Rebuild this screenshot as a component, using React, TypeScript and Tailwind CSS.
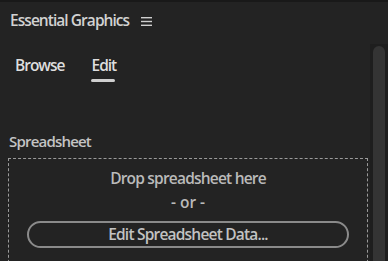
import React from "react";

export default function App() {
  return (
    <div
      className="relative w-[388px] h-[261px] overflow-hidden bg-[#232323] text-[#d4d4d4]"
      style={{ fontFamily: '"Open Sans", "Noto Sans", sans-serif' }}
    >
      <div className="h-[2px] bg-[#191919]" />
      <div className="flex items-center h-[38px] pl-[10px]">
        <span className="text-[15.5px] font-semibold tracking-[-0.95px] text-[#d2d2d2]">Essential Graphics</span>
        <svg className="ml-[12px]" width="11" height="9" viewBox="0 0 11 9">
          <rect x="0" y="0" width="11" height="1.4" fill="#cfcfcf" />
          <rect x="0" y="3.8" width="11" height="1.4" fill="#cfcfcf" />
          <rect x="0" y="7.6" width="11" height="1.4" fill="#cfcfcf" />
        </svg>
      </div>
      <div className="flex">
        <div className="flex-1">
          <div className="flex gap-[27px] pl-[15px] pt-[14px] text-[15.5px] font-semibold tracking-[-1px] text-[#dedede]">
            <span>Browse</span>
            <span className="relative">
              Edit
              <span className="absolute left-0 right-[1px] top-[25px] h-[3px] rounded-full bg-[#cfcfcf]" />
            </span>
          </div>
          <div className="pl-[9px] pt-[53px] text-[15px] font-semibold tracking-[-0.8px] text-[#c4c4c4]">Spreadsheet</div>
          <div className="ml-[8px] mr-[2px] mt-[5px] border border-dashed border-[#9a9a9a] h-[110px] flex flex-col items-center pt-[8px]">
            <div className="text-[15.5px] font-semibold tracking-[-0.8px] text-[#bababa]">Drop spreadsheet here</div>
            <div className="text-[15.5px] font-semibold text-[#bababa] mt-[1px]">- or -</div>
            <div className="mt-[7px] w-[322px] h-[27px] rounded-full border-2 border-[#8a8a8a] flex items-center justify-center text-[15.5px] font-semibold tracking-[-0.8px] text-[#c2c2c2]">
              Edit Spreadsheet Data...
            </div>
          </div>
        </div>
        <div className="w-[18px] mt-[4px] bg-[#1e1e1e] flex justify-center pt-[2px] h-[300px]">
          <div className="w-[12px] h-[280px] rounded-t-full bg-[#343434]" />
        </div>
      </div>
    </div>
  );
}
